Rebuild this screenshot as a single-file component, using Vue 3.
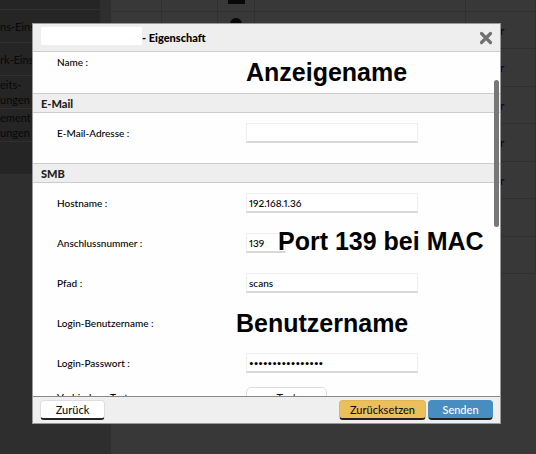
<script setup>
import { ref } from 'vue'

const menu = ['', 'ns-Einst', 'rk-Einst', 'eits-\nungen', 'ement-\nungen', '']
const rows = ['', 'r', 'r', 'r', 'r', 'r', '', '']
const mail = ref('')
const host = ref('192.168.1.36')
const port = ref('139')
const path = ref('scans')
const password = ref('abcdefghijklmnop')
</script>

<template>
  <div class="page">
    <nav class="side">
      <ul class="menu">
        <li v-for="(item, i) in menu" :key="i">{{ item }}</li>
      </ul>
    </nav>
    <table class="list">
      <colgroup>
        <col class="c1"><col class="c2"><col class="c3"><col><col class="c5">
      </colgroup>
      <tbody>
        <tr v-for="(row, i) in rows" :key="i">
          <td></td>
          <td></td>
          <td class="state"><span v-if="i < 2" :class="i ? 'dot' : 'block'"></span></td>
          <td></td>
          <td class="tail">{{ row }}</td>
        </tr>
      </tbody>
    </table>

    <div class="overlay">
      <form class="dialog" role="dialog" aria-labelledby="title" @submit.prevent>
        <header class="head">
          <span class="mask"></span>
          <h1 id="title">- Eigenschaft</h1>
          <button type="button" class="close">
            <svg viewBox="0 0 14 14" width="14" height="14" aria-hidden="true">
              <path d="M2.5 2.5 11.5 11.5M11.5 2.5 2.5 11.5" fill="none" stroke="#707070" stroke-width="3.2" stroke-linecap="round" />
            </svg>
          </button>
        </header>

        <div class="body">
          <div class="row first">
            <span class="label">Name :</span>
            <strong class="note">Anzeigename</strong>
          </div>
          <h2>E-Mail</h2>
          <div class="row spaced">
            <label class="label" for="mail">E-Mail-Adresse :</label>
            <input id="mail" v-model="mail" type="text">
          </div>
          <h2>SMB</h2>
          <div class="row">
            <label class="label" for="host">Hostname :</label>
            <input id="host" v-model="host" type="text">
          </div>
          <div class="row">
            <label class="label" for="port">Anschlussnummer :</label>
            <div class="port">
              <input id="port" v-model="port" type="text">
              <strong class="note over">Port 139 bei MAC</strong>
            </div>
          </div>
          <div class="row">
            <label class="label" for="path">Pfad :</label>
            <input id="path" v-model="path" type="text">
          </div>
          <div class="row">
            <span class="label">Login-Benutzername :</span>
            <strong class="note wide">Benutzername</strong>
          </div>
          <div class="row">
            <label class="label" for="password">Login-Passwort :</label>
            <input id="password" v-model="password" type="password">
          </div>
          <div class="row last">
            <span class="label">Verbindung Test :</span>
            <button type="button" class="test">Test</button>
          </div>
          <span class="thumb"></span>
        </div>

        <footer class="foot">
          <button type="button" class="btn">Zurück</button>
          <span class="actions">
            <button type="reset" class="btn amber">Zurücksetzen</button>
            <button type="submit" class="btn blue">Senden</button>
          </span>
        </footer>
      </form>
    </div>
  </div>
</template>

<style>
body {
  margin: 0;
  background: #383838;
}
</style>

<style scoped>
* {
  box-sizing: border-box;
}
.page {
  display: flex;
  align-items: stretch;
  height: 100vh;
  min-height: 300px;
  overflow: hidden;
  font-family: Lato, "Liberation Sans", sans-serif;
  font-size: 10px;
  font-weight: 500;
  font-variant-numeric: proportional-nums;
  color: #000;
}
.side {
  flex: none;
  width: 111px;
  padding-right: 11px;
  background: #2e2e2e;
}
.menu {
  margin: 0;
  padding: 0;
  list-style: none;
  background: #252525;
  font-size: 11px;
  line-height: 15px;
  color: #090909;
  white-space: pre;
}
.menu li {
  display: flex;
  align-items: center;
  height: 33px;
  border-bottom: 1px solid #303030;
}
.menu li:first-child {
  height: 10px;
}
.list {
  flex: 1;
  align-self: flex-start;
  table-layout: fixed;
  border-collapse: separate;
  border-spacing: 0;
}
.c1 {
  width: 51px;
}
.c2 {
  width: 56px;
}
.c3 {
  width: 37px;
}
.c5 {
  width: 70px;
}
.list td {
  height: 37px;
  padding: 0;
  border-right: 1px solid #303030;
  border-bottom: 1px solid #303030;
}
.list .state {
  vertical-align: top;
}
.list tr:nth-child(odd) td {
  height: 38px;
}
.list tr:first-child td {
  height: 12px;
}
.list .tail {
  padding-left: 34px;
  font-size: 12px;
  color: #080808;
}
.block,
.dot {
  display: block;
  margin: 0 auto;
  background: #080808;
}
.block {
  width: 17px;
  height: 4px;
}
.dot {
  width: 12px;
  height: 12px;
  margin-top: 6px;
  border-radius: 50%;
}
.overlay {
  position: fixed;
  inset: 0;
  display: flex;
  padding: 23px 35px 30px 32px;
}
.dialog {
  flex: 1;
  display: flex;
  flex-direction: column;
  min-width: 0;
  border: 1px solid #999;
  background: #fefefe;
}
.head {
  flex: none;
  display: flex;
  align-items: center;
  height: 28px;
  padding: 0 7px 0 8px;
  border-bottom: 1px solid #ccc;
  background: #eee;
}
.mask {
  width: 101px;
  height: 18px;
  margin-bottom: 3px;
  background: #fff;
}
h1 {
  flex: 1;
  margin: 0;
  font-size: 11px;
  line-height: 20px;
  font-weight: 900;
  color: #000;
}
.close {
  display: flex;
  padding: 0;
  border: 0;
  background: none;
}
.body {
  position: relative;
  flex: 1;
  min-height: 0;
  overflow: hidden;
}
h2 {
  height: 20px;
  margin: 0;
  padding: 0 8px;
  border-top: 1px solid #ccc;
  border-bottom: 1px solid #ccc;
  background: #eee;
  font-size: 11px;
  line-height: 19px;
  font-weight: 900;
  color: #222;
}
.row {
  display: flex;
  align-items: center;
  height: 40px;
  padding-left: 24px;
}
.row.first {
  align-items: flex-start;
  height: 41px;
}
.row.spaced {
  margin-bottom: 10px;
}
.row.last {
  align-items: flex-start;
  padding-top: 4px;
}
.label {
  flex: none;
  width: 189px;
  line-height: 20px;
}
input {
  width: 172px;
  height: 20px;
  padding: 0 2px;
  border: 1px solid #eee;
  border-bottom: 2px solid #d8d8d8;
  background: #fff;
  font: inherit;
  font-variant-numeric: inherit;
  color: #000;
}
input[type="password"] {
  font-size: 8px;
}
.port {
  position: relative;
}
.port input {
  width: 40px;
}
.note {
  font-family: "Liberation Sans", Arial, sans-serif;
  font-size: 25px;
  line-height: 40px;
  font-weight: 700;
  color: #000;
  white-space: nowrap;
}
.note.over {
  position: absolute;
  top: -12px;
  left: 32px;
}
.note.wide {
  margin-left: -10px;
}
.test {
  width: 81px;
  height: 20px;
  padding: 0;
  border: 1px solid #ddd;
  border-radius: 5px;
  background: #fff;
  font: inherit;
  font-size: 11px;
  color: #111;
}
.thumb {
  position: absolute;
  top: 8%;
  right: 1px;
  width: 5px;
  height: 43%;
  border-radius: 3px;
  background: #777;
}
.foot {
  flex: none;
  display: flex;
  justify-content: space-between;
  align-items: center;
  height: 27px;
  padding: 0 7px;
  border-top: 1px solid #888;
  background: #efefef;
}
.actions {
  display: flex;
  gap: 2px;
}
.btn {
  width: 65px;
  height: 20px;
  padding: 0;
  border: 1px solid #ddd;
  border-bottom: 2px solid #222;
  border-radius: 4px;
  background: #fff;
  font: inherit;
  font-size: 11px;
  color: #111;
}
.btn.amber {
  width: 87px;
  border-color: #e0b755 #e0b755 #222;
  background: #eabf5c;
}
.btn.blue {
  border-color: #488dc0 #488dc0 #222;
  background: #488dc0;
  color: #fff;
}
</style>
